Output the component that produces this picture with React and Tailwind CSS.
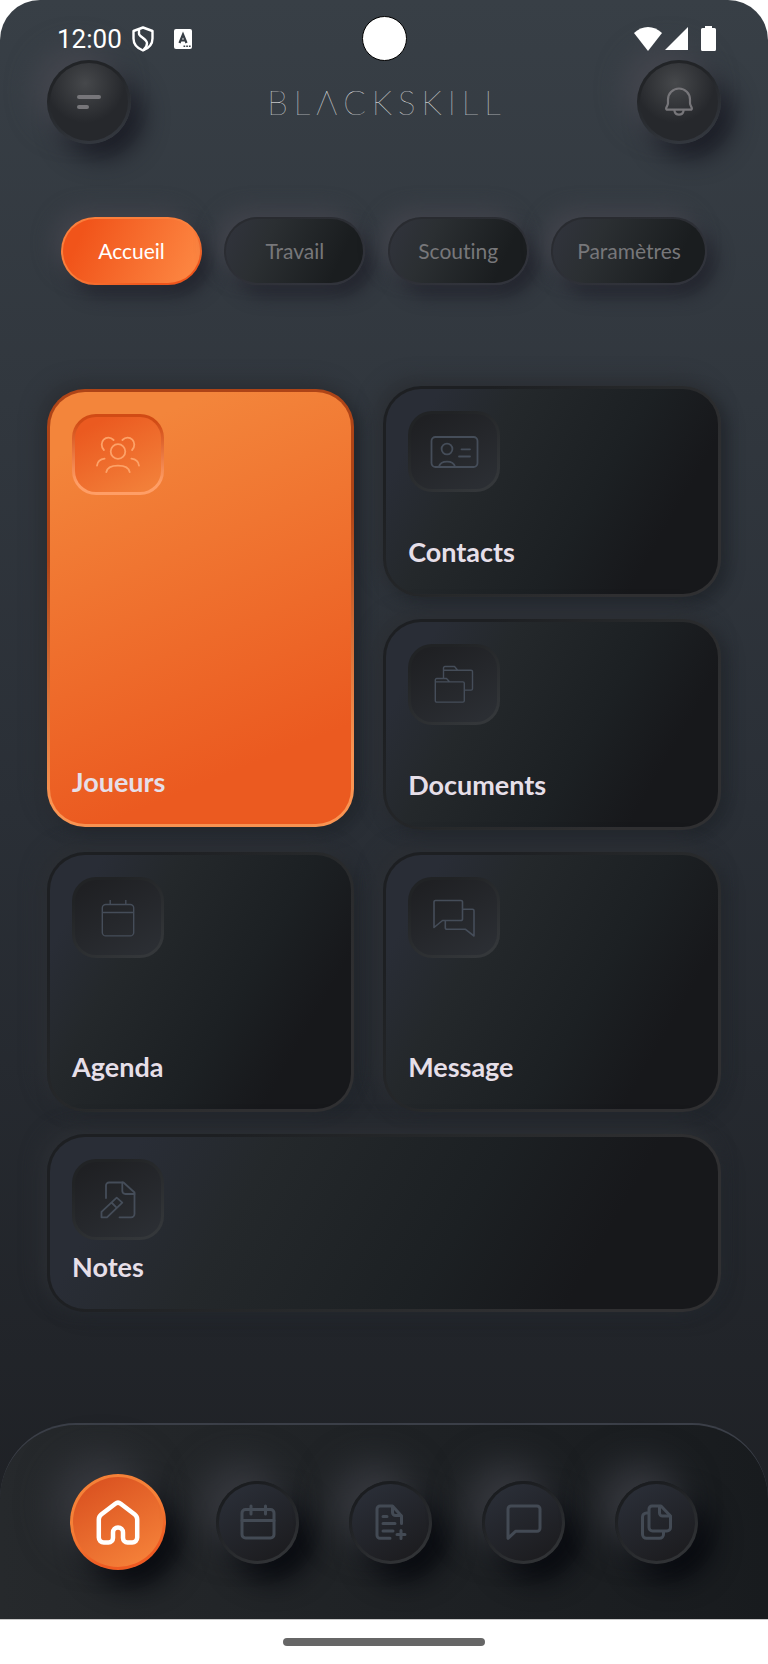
import clsx from 'clsx';
import { useState } from 'react';

const PlayersIcon = () => (
    <svg width="48" height="40" viewBox="0 0 48 40" fill="none" stroke="currentColor" strokeWidth="1.8" strokeLinecap="round">
        <circle cx="24" cy="16.5" r="7.3" />
        <path d="M12.3 37.2C13 33 17.5 30.6 24 30.6S35 33 35.7 37.2" />
        <path d="M19.6 5C18 3.4 16.3 2.7 14.4 2.7a6.7 6.7 0 0 0-6.7 6.7c0 2.2.8 4.2 2.2 5.6" />
        <path d="M28.4 5c1.6-1.6 3.3-2.3 5.2-2.3a6.7 6.7 0 0 1 6.7 6.7c0 2.2-.8 4.2-2.2 5.6" />
        <path d="M3 30.6c.4-3.6 3.4-6.5 7.6-7M45 30.6c-.4-3.6-3.4-6.5-7.6-7" />
    </svg>
);

const ContactIcon = () => (
    <svg width="49" height="34" viewBox="0 0 49 34" fill="none" stroke="currentColor" strokeWidth="1.8" strokeLinecap="round">
        <rect x="1.5" y="2" width="46" height="30" rx="4" />
        <circle cx="17" cy="14" r="5.4" />
        <path d="M9 31.5c.8-3 4-4.9 8-4.9s7.2 1.9 8 4.9M31.5 14.3H40M29 21.5H40" />
    </svg>
);

const FoldersIcon = () => (
    <svg width="40" height="39" viewBox="0 0 40 39" fill="none" stroke="currentColor" strokeWidth="1.4" strokeLinejoin="round">
        <path d="M1.3 14.9a1.4 1.4 0 0 1 1.4-1.4H12.5L15.7 16.9H28.9a1.4 1.4 0 0 1 1.4 1.4V35.7a1.4 1.4 0 0 1-1.4 1.4H2.7a1.4 1.4 0 0 1-1.4-1.4ZM1.3 16.9H15.7" />
        <path d="M9.5 13.5V2.9a1.4 1.4 0 0 1 1.4-1.4H20.5L23.7 5.2H37.1a1.4 1.4 0 0 1 1.4 1.4V23.7a1.4 1.4 0 0 1-1.4 1.4H30.3M9.5 5.2H23.7" />
    </svg>
);

const AgendaIcon = () => (
    <svg width="40" height="40" viewBox="0 0 40 40" fill="none" stroke="currentColor" strokeWidth="1.4">
        <rect x="4.3" y="6.5" width="31.4" height="31.4" rx="3.5" />
        <path d="M4.3 14.5H35.7M12.2 2V6.5M27.8 2V6.5" />
    </svg>
);

const ChatIcon = () => (
    <svg width="42" height="38" viewBox="0 0 42 38" fill="none" stroke="currentColor" strokeWidth="1.6" strokeLinejoin="round">
        <path d="M1 28.5V3a1.5 1.5 0 0 1 1.5-1.5H28A1.5 1.5 0 0 1 29.5 3V20A1.5 1.5 0 0 1 28 21.500H9.500Z" />
        <path d="M29.5 10.3H39.5A1.5 1.5 0 0 1 41 11.8V37L32.500 30.3H13.8a1.5 1.5 0 0 1-1.5-1.5V21.500" />
    </svg>
);

const NoteIcon = () => (
    <svg width="36" height="39" viewBox="0 0 36 39" fill="none" stroke="currentColor" strokeWidth="1.8" strokeLinecap="round" strokeLinejoin="round">
        <path d="M6 18V5.5a3 3 0 0 1 3-3H23.500L34.500 12.500V33.8a3.5 3.5 0 0 1-3.5 3.5H19.500" />
        <path d="M22.3 2.5V11a3 3 0 0 0 3 3H34.500" />
        <path d="M16.7 17.7 22.3 22.7 7 37.3H1.500V31.8ZM11.5 22.5 16.8 27.8" />
    </svg>
);

const BellIcon = () => (
    <svg width="28" height="30" viewBox="0 0 28 30" fill="none" stroke="currentColor" strokeWidth="2.2" strokeLinejoin="round">
        <path d="M2.6 22.7c-1.2 0-1.6-.7-1.4-1.7.6-1.7 1.8-2.9 1.8-4.7V12.500a11 11 0 0 1 22 0v3.8c0 1.8 1.2 3 1.8 4.7.2 1-.2 1.7-1.4 1.7Z" />
        <path d="M9.500 23v1a4.6 4.6 0 0 0 9 0v-1" />
    </svg>
);

const HomeIcon = () => (
    <svg width="48" height="48" viewBox="0 0 48 48" fill="none" stroke="currentColor" strokeWidth="4.5" strokeLinejoin="round">
        <path d="M4.8 21.5c0-2 .9-3.8 2.4-5L21.3 5.7a4.4 4.4 0 0 1 5.4 0L40.8 16.5c1.5 1.2 2.4 3 2.4 5V39.500a5 5 0 0 1-5 5H33.500a4.5 4.5 0 0 1-4.5-4.5V34.500a5 5 0 0 0-10 0V40a4.5 4.5 0 0 1-4.5 4.5H9.800a5 5 0 0 1-5-5Z" />
    </svg>
);

const NavCalendarIcon = () => (
    <svg width="36" height="36" viewBox="0 0 36 36" fill="none" stroke="currentColor" strokeWidth="3" strokeLinecap="round">
        <rect x="2" y="5.5" width="32" height="28.5" rx="3.5" />
        <path d="M2 16.500H34M11 2V10M25.500 2V10" />
    </svg>
);

const NavReportIcon = () => (
    <svg width="36" height="36" viewBox="0 0 36 36" fill="none" stroke="currentColor" strokeWidth="3" strokeLinecap="round" strokeLinejoin="round">
        <path d="M17 34.300H7a3 3 0 0 1-3-3V5a3 3 0 0 1 3-3H19.500L28.500 12V19.500" />
        <path d="M19.500 2.500V8.500a3 3 0 0 0 3 3H28M10 12.500H14M10 19.500H22M10 27H20M28 26.500V34.500M24 30.500H32" />
    </svg>
);

const NavMessageIcon = () => (
    <svg width="36" height="36" viewBox="0 0 36 36" fill="none" stroke="currentColor" strokeWidth="3" strokeLinejoin="round">
        <path d="M2 34.300V5a3 3 0 0 1 3-3H31a3 3 0 0 1 3 3V24.300a3 3 0 0 1-3 3H9.500Z" />
    </svg>
);

const NavFilesIcon = () => (
    <svg width="36" height="36" viewBox="0 0 36 36" fill="none" stroke="currentColor" strokeWidth="3" strokeLinecap="round" strokeLinejoin="round">
        <path d="M13 2H22L31.500 12V23.500a3.5 3.5 0 0 1-3.5 3.5H13.500a3.5 3.5 0 0 1-3.5-3.5V5A3 3 0 0 1 13 2Z" />
        <path d="M20.500 2.500V9a3 3 0 0 0 3 3H31M9.500 9H7.500A4 4 0 0 0 3.500 13V30.300a4 4 0 0 0 4 4H20.500a4 4 0 0 0 4-4V27.500" />
    </svg>
);

const tabs = ['Accueil', 'Travail', 'Scouting', 'Paramètres'];

const cards = [
    { name: 'Joueurs', icon: PlayersIcon, featured: true, size: 'row-span-2 my-[3px]' },
    { name: 'Contacts', icon: ContactIcon, size: 'min-h-[211px]' },
    { name: 'Documents', icon: FoldersIcon, size: 'min-h-[211px]' },
    { name: 'Agenda', icon: AgendaIcon, size: 'min-h-[260px]' },
    { name: 'Message', icon: ChatIcon, size: 'min-h-[260px]' },
    { name: 'Notes', icon: NoteIcon, size: 'col-span-2' },
];

const navItems = [
    { name: 'Accueil', icon: HomeIcon },
    { name: 'Agenda', icon: NavCalendarIcon },
    { name: 'Rapports', icon: NavReportIcon },
    { name: 'Messages', icon: NavMessageIcon },
    { name: 'Fichiers', icon: NavFilesIcon },
];

const StatusBar = () => (
    <div className="relative z-10 grid grid-cols-[1fr_auto_1fr] items-center h-[60px] pt-4 text-white">
        <div className="flex items-center pl-[57px]">
            <span className="font-[Roboto,sans-serif] text-[26px] leading-8">12:00</span>
            <svg className="ml-[10px]" width="22" height="26" viewBox="0 0 22 26" fill="none" stroke="currentColor" strokeWidth="2.4" strokeLinejoin="round">
                <path d="M11 1.5 20.5 5V12.500c0 5.5-3.5 9.7-9.5 12-6-2.3-9.5-6.5-9.5-12V5Z" />
                <path d="M7 3.5v4.3c0 3 8 5 8 9.5 0 2.5-1 4.7-3.5 6.7" />
            </svg>
            <svg className="ml-5" width="18" height="20" viewBox="0 0 18 20">
                <rect width="18" height="20" rx="2" fill="white" />
                <path d="M5.5 14 9 5.5 12.5 14M7 11.500H11" fill="none" stroke="#373e45" strokeWidth="2.2" />
                <path d="M9.5 17.3H17" stroke="#373e45" strokeWidth="1.5" strokeDasharray="1.7 1" />
            </svg>
        </div>
        <div className="size-[45px] rounded-full bg-white border border-black"></div>
        <div className="flex items-center justify-end pr-[52px]">
            <svg width="28" height="24" viewBox="0 0 28 24" fill="currentColor">
                <path d="M14 24 0 6C4 2 9 0 14 0s10 2 14 6Z" />
            </svg>
            <svg className="ml-[3px]" width="23" height="23" viewBox="0 0 23 23" fill="currentColor">
                <path d="M23 0V23H0Z" />
            </svg>
            <svg className="ml-[13px]" width="15" height="25" viewBox="0 0 15 25" fill="currentColor">
                <path d="M4 0h7v2h2.5A1.5 1.5 0 0 1 15 3.5v20a1.5 1.5 0 0 1-1.5 1.5h-12A1.5 1.5 0 0 1 0 23.500v-20A1.5 1.5 0 0 1 1.5 2H4Z" />
            </svg>
        </div>
    </div>
);

const RoundButton = ({ label, children }) => (
    <button
        aria-label={label}
        className="size-[84px] shrink-0 flex items-center justify-center rounded-full border-3 border-transparent text-[#77767a] [background:radial-gradient(circle_at_45%_26%,#46484b,#26282c_55%)_padding-box,linear-gradient(160deg,#222427_30%,#33373e_90%)_border-box] shadow-[-12px_-12px_28px_#44464e,12px_14px_24px_#1a1c25]"
    >
        {children}
    </button>
);

const Card = ({ name, icon: Icon, featured, size }) => (
    <a
        href={`#${name.toLowerCase()}`}
        className={clsx(
            'flex flex-col items-start justify-between gap-[10px] px-[22px] pt-[22px] pb-[25px] rounded-[38px] border-3 border-transparent shadow-[-6px_-6px_20px_#2c2f34,6px_6px_16px_#20252b]',
            size,
            featured
                ? '[background:linear-gradient(158deg,#f3853b_12%,#eb5a20_82%)_padding-box,linear-gradient(170deg,#ae4417_35%,#fa9452_85%)_border-box]'
                : '[background:linear-gradient(120deg,#292d36_12%,#24282b_30%,#1c2023_60%,#17181b_80%)_padding-box,linear-gradient(135deg,#1d1f22_20%,#27292b_50%,#303032_80%)_border-box]'
        )}
    >
        <span
            className={clsx(
                'flex items-center justify-center w-[92px] h-[81px] rounded-[24px] border-3 border-transparent',
                featured
                    ? 'text-[#fda268] [background:linear-gradient(150deg,#eb5a20_15%,#f27f39_90%)_padding-box,linear-gradient(180deg,#d14b15_10%,#ff9e66_85%)_border-box]'
                    : 'text-[#454d59] [background:linear-gradient(150deg,#1f2023_10%,#2b2e33_90%)_padding-box,linear-gradient(150deg,#212325_20%,#34373a_90%)_border-box]'
            )}
        >
            <Icon />
        </span>
        <span className="text-[27px] leading-[34px] font-bold text-[#e6dfe8]">{name}</span>
    </a>
);

export default function App() {
    const [activeTab, setActiveTab] = useState('Accueil');
    const [activeNav, setActiveNav] = useState(0);

    return (
        <div className="bg-white font-[Lato,sans-serif] [font-variant-ligatures:none]">
            <div className="overflow-hidden rounded-t-[40px] bg-linear-to-b from-[#383f46] via-[#2a2f36] to-[#1d1f23]">
                <StatusBar />

                {/* Header */}
                <header className="flex items-center justify-between px-[47px]">
                    <RoundButton label="Menu">
                        <span className="flex flex-col gap-[6px] w-6">
                            <span className="h-1 w-6 rounded-full bg-current"></span>
                            <span className="h-1 w-3 rounded-full bg-current"></span>
                        </span>
                    </RoundButton>
                    <h1 className="flex gap-[6px] font-thin text-[33px] leading-10 text-white">
                        {[...'BLΛCKSKILL'].map((letter, i) => (
                            <span key={i}>{letter}</span>
                        ))}
                    </h1>
                    <RoundButton label="Notifications">
                        <BellIcon />
                    </RoundButton>
                </header>

                {/* Tabs */}
                <div className="flex justify-between gap-4 mt-[73px] px-[61px]">
                    {tabs.map((tab) => (
                        <button
                            key={tab}
                            onClick={() => setActiveTab(tab)}
                            className={clsx(
                                'h-[68px] min-w-[141px] px-6 rounded-full border-2 border-transparent text-[21px] leading-7 shadow-[-8px_-8px_20px_#41434b,8px_10px_18px_#22242d]',
                                tab === activeTab
                                    ? 'text-white [background:linear-gradient(115deg,#f1541a_15%,#fc8440_90%)_padding-box,linear-gradient(160deg,#fb7f3c_50%,#ee541b_85%)_border-box]'
                                    : 'text-[#77777a] [background:linear-gradient(115deg,#30333b_5%,#2b2f32_30%,#1a1d1f_80%)_padding-box,linear-gradient(160deg,#292b30_20%,#31333b_80%)_border-box]'
                            )}
                        >
                            {tab}
                        </button>
                    ))}
                </div>

                {/* Cards */}
                <main className="grid grid-cols-[10fr_11fr] gap-x-[29px] gap-y-[22px] mt-[101px] px-[47px]">
                    {cards.map((card) => (
                        <Card key={card.name} {...card} />
                    ))}
                </main>

                {/* Bottom navigation */}
                <nav className="flex items-center justify-between h-[196px] mt-[111px] px-[70px] rounded-t-[76px] border-t-2 border-[#3b3f48] bg-linear-to-r from-[#26292c] to-[#181b1e]">
                    {navItems.map(({ name, icon: Icon }, i) => (
                        <button
                            key={name}
                            aria-label={name}
                            onClick={() => setActiveNav(i)}
                            className={clsx(
                                'flex items-center justify-center rounded-full border-3 border-transparent shadow-[-16px_-18px_36px_#36383e,14px_16px_28px_#07090e]',
                                i === activeNav
                                    ? 'size-24 text-white [background:linear-gradient(150deg,#dc5522_15%,#f58139_90%)_padding-box,linear-gradient(160deg,#f58138_40%,#ee5a22_80%)_border-box]'
                                    : 'size-[83px] text-[#434a54] [background:linear-gradient(150deg,#2a2e37_10%,#1c1c1f_90%)_padding-box,linear-gradient(150deg,#1b1d20_20%,#323437_90%)_border-box]'
                            )}
                        >
                            <Icon />
                        </button>
                    ))}
                </nav>
            </div>

            <div className="flex items-center justify-center h-[45px] border-t border-[#c9c9c9]">
                <div className="h-2 w-[202px] rounded-full bg-[#666666]"></div>
            </div>
        </div>
    );
}
